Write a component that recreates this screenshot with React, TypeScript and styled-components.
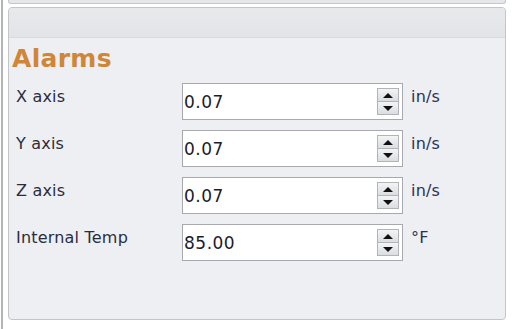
import styled, { createGlobalStyle } from "styled-components";

const GlobalStyle = createGlobalStyle`
  html, body {
    margin: 0;
    padding: 0;
    background: #ffffff;
  }
  body {
    font-family: "DejaVu Sans", Verdana, sans-serif;
  }
`;

const Frame = styled.div`
  width: 517px;
  height: 329px;
  margin-left: 1px;
  border-left: 2px solid #b3b4ba;
  padding: 0 12px 0 5px;
  box-sizing: border-box;
  display: flex;
  flex-direction: column;
`;

const PrevPanelEdge = styled.div`
  height: 3px;
  background: #e6e7ea;
  border: 1px solid #c6c7cc;
  border-top: none;
  border-radius: 0 0 3px 3px;
  margin-bottom: 3px;
`;

const Panel = styled.section`
  height: 311px;
  background: #eeeff2;
  border: 1px solid #c4c5cb;
  border-radius: 4px;
  display: flex;
  flex-direction: column;
  overflow: hidden;
`;

const PanelHeader = styled.div`
  height: 29px;
  background: linear-gradient(#e8e9ec, #e3e4e7);
  border-bottom: 1px solid #d9dade;
`;

const Title = styled.h2`
  margin: 6px 0 0 3px;
  font-family: "DejaVu Sans", Verdana, sans-serif;
  font-weight: bold;
  font-size: 25px;
  line-height: 30px;
  letter-spacing: 0.3px;
  color: #d08638;
`;

const Rows = styled.div`
  margin-top: 9px;
  display: flex;
  flex-direction: column;
  gap: 10px;
`;

const Row = styled.div`
  display: grid;
  grid-template-columns: 166px 221px auto;
  padding-left: 7px;
  height: 37px;
`;

const Label = styled.span<{ $unit?: boolean }>`
  padding-top: 4px;
  padding-left: ${(p) => (p.$unit ? "8px" : "0")};
  font-size: 16px;
  line-height: 20px;
  letter-spacing: 0.2px;
  color: ${(p) => (p.$unit ? "#2b3259" : "#2a2d3d")};
  white-space: nowrap;
`;

const SpinBox = styled.div`
  display: flex;
  align-items: flex-start;
  height: 37px;
  box-sizing: border-box;
  background: #ffffff;
  border: 1px solid #a8a9af;
`;

const ValueInput = styled.input`
  flex: 1;
  min-width: 0;
  height: 35px;
  padding: 0 1px;
  border: none;
  outline: none;
  background: transparent;
  font-family: "DejaVu Sans", Verdana, sans-serif;
  font-size: 17px;
  letter-spacing: 0.5px;
  color: #1c1b2a;
`;

const SpinButtons = styled.div`
  display: flex;
  flex-direction: column;
  margin: 4px 3px 0 0;
  width: 22px;
`;

const SpinButton = styled.div`
  height: 14px;
  box-sizing: border-box;
  border: 1px solid #b3b4ba;
  background: linear-gradient(#f3f4f6, #dcdde1);
  display: flex;
  align-items: center;
  justify-content: center;
  & + & {
    margin-top: -1px;
  }
`;

const Arrow = styled.span<{ $down?: boolean }>`
  width: 0;
  height: 0;
  border-left: 5px solid transparent;
  border-right: 5px solid transparent;
  ${(p) =>
    p.$down
      ? "border-top: 5px solid #111111;"
      : "border-bottom: 5px solid #111111;"}
`;

type Alarm = { label: string; value: string; unit: string };

const alarms: Alarm[] = [
  { label: "X axis", value: "0.07", unit: "in/s" },
  { label: "Y axis", value: "0.07", unit: "in/s" },
  { label: "Z axis", value: "0.07", unit: "in/s" },
  { label: "Internal Temp", value: "85.00", unit: "°F" },
];

export default function App() {
  return (
    <>
      <GlobalStyle />
      <Frame>
        <PrevPanelEdge />
        <Panel>
          <PanelHeader />
          <Title>Alarms</Title>
          <Rows>
            {alarms.map((a) => (
              <Row key={a.label}>
                <Label>{a.label}</Label>
                <SpinBox>
                  <ValueInput defaultValue={a.value} />
                  <SpinButtons>
                    <SpinButton>
                      <Arrow />
                    </SpinButton>
                    <SpinButton>
                      <Arrow $down />
                    </SpinButton>
                  </SpinButtons>
                </SpinBox>
                <Label $unit>{a.unit}</Label>
              </Row>
            ))}
          </Rows>
        </Panel>
      </Frame>
    </>
  );
}
